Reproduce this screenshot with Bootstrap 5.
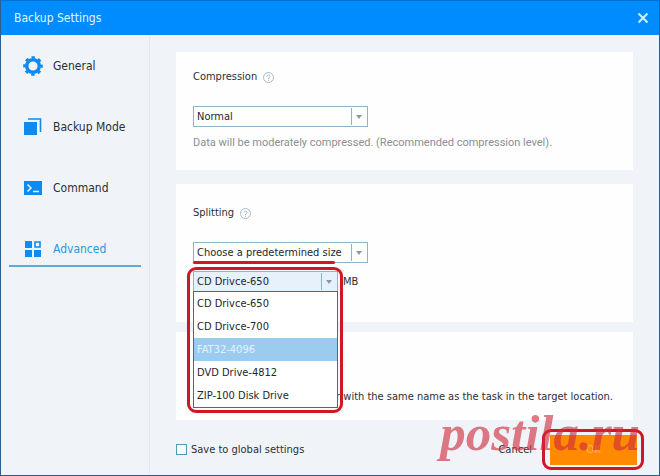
<!DOCTYPE html>
<html lang="en">
<head>
<meta charset="utf-8">
<meta name="viewport" content="width=device-width, initial-scale=1">
<title>Backup Settings</title>
<link href="https://cdn.jsdelivr.net/npm/bootstrap@5.3.0/dist/css/bootstrap.min.css" rel="stylesheet">
<style>
  body { font-family: "DejaVu Sans Condensed", "Noto Sans", sans-serif; font-size: 11px; line-height: 16px; color: #2b2f33; }
  .app-window { background: #f0f4f9; border: 1px solid #2d5c8e; border-top-color: #0670cf; }
  .title-bar { background: #008cff; color: #e4f5ff; font-size: 12px; height: 34px; padding: 0 10px 0 13px; }
  .title-bar button { line-height: 0; color: #c8f4ff; }
  .side-nav { width: 149px; border-right: 1px solid #e4e8ee; padding: 8px 8px 0; }
  .side-link { font-size: 12px; height: 41px; margin-bottom: 20px; padding: 7px 0 0 14px; gap: 10px; color: #2b2f33; text-decoration: none; border-bottom: 2px solid transparent; }
  .side-link.active { color: #2699dc; border-bottom-color: #5aaed2; }
  .side-link svg { width: 20px; height: 20px; color: #0d8bf0; }
  .content-area { padding: 17px 26px 4px 26px; }
  .panel { background: #fefefe; padding: 17px 17px 0; }
  .panel-compression { height: 118px; margin-bottom: 14px; }
  .panel-splitting { height: 138px; margin-bottom: 10px; padding-top: 21px; }
  .panel-task { height: 88px; padding: 57px 20px 0; white-space: nowrap; }
  .panel-title { gap: 6px; margin-bottom: 21px; }
  .panel-title svg { color: #a9b8c6; }
  .combo { position: relative; width: 175px; }
  .combo select { appearance: none; display: block; width: 100%; height: 21px; padding: 0 3px; border: 1px solid #8fb3c9; border-radius: 0; background: #fff; color: #23272b; font: inherit; }
  .combo .combo-arrow { position: absolute; right: 1px; top: 2px; pointer-events: none; color: #8798a8; }
  .size-row { gap: 5px; }
  .combo-size { width: 145px; }
  .combo-size select { background: #e6f1fb; }
  .combo-marked::after { content: ""; position: absolute; left: 0; top: 19px; width: 142px; height: 3px; background: #cf1827; border-radius: 2px; }
  .size-menu { position: absolute; z-index: 2; top: 20px; left: 0; width: 145px; background: #fff; border: 1px solid #3c6f8e; }
  .size-menu button { height: 23px; padding: 0 3px; text-align: left; border: 0; background: none; color: #23272b; }
  .size-menu button.chosen { background: #9ccbf0; color: #e2f3ff; }
  .red-frame { position: absolute; z-index: 3; border: 3px solid #cf1827; border-radius: 9px; pointer-events: none; }
  .size-frame { left: -6px; top: -4px; width: 156px; height: 146px; }
  .hint { color: #8b8f94; margin-top: 8px; font-family: Roboto, sans-serif; }
  .footer-row { min-height: 51px; padding-top: 8px; }
  .footer-row input { appearance: none; width: 11px; height: 11px; border: 1px solid #4e9bb5; background: #f7fbff; }
  .footer-row .btn { font-size: 11px; line-height: 16px; color: #2b2f33; }
  .footer-actions { gap: 18px; }
  .ok-wrap { position: relative; margin-right: -4px; }
  .ok-wrap .ok-btn { display: block; width: 87px; height: 30px; border: 0; background: #ff8a00; color: #ffb561; }
  .ok-frame { inset: -6px -7px -5px -8px; }
  .watermark { position: absolute; z-index: 4; right: 19px; bottom: 17px; font: italic 700 51px/50px "Liberation Serif", serif; color: rgba(207,40,58,.62); pointer-events: none; }
</style>
</head>
<body>
<div class="app-window min-vh-100 d-flex flex-column position-relative overflow-hidden">
  <header class="title-bar d-flex align-items-center justify-content-between">
    <span>Backup Settings</span>
    <button class="btn p-0 border-0" type="button" aria-label="Close"><svg width="12" height="12" viewBox="0 0 12 12" fill="none" stroke="currentColor" stroke-width="2"><path d="M1.5 1.5l9 9m0-9l-9 9"/></svg></button>
  </header>
  <div class="d-flex flex-grow-1">
    <nav class="side-nav flex-shrink-0" aria-label="Sections">
      <a class="side-link d-flex align-items-center" href="#general"><svg viewBox="0 0 20 20" fill="none" stroke="currentColor"><circle cx="10" cy="10" r="6.3" stroke-width="3.4"/><circle cx="10" cy="10" r="8.6" stroke-width="2.4" stroke-dasharray="3.4 3.354" stroke-dashoffset="1.7"/></svg>General</a>
      <a class="side-link d-flex align-items-center" href="#mode"><svg viewBox="0 0 20 20"><path d="M1 5h13v13H1z" fill="currentColor"/><path d="M5 2h12.5v13" fill="none" stroke="currentColor" stroke-width="1.6"/></svg>Backup Mode</a>
      <a class="side-link d-flex align-items-center" href="#command"><svg viewBox="0 0 20 20"><path d="M1 3h18v14H1z" fill="currentColor"/><path d="M4.500 6.500L8 10l-3.500 3.500M10 13.500h6" fill="none" stroke="#e4f4ff" stroke-width="1.500"/></svg>Command</a>
      <a class="side-link active d-flex align-items-center" href="#advanced" aria-current="page"><svg viewBox="0 0 20 20" fill="currentColor"><path d="M2 2h7v7H2zM2 11h7v7H2zM11 11h7v7h-7z"/><path d="M12 3h5v5h-5z" fill="none" stroke="currentColor" stroke-width="1.600"/></svg>Advanced</a>
    </nav>
    <main class="content-area flex-grow-1 d-flex flex-column">
      <section class="panel panel-compression">
        <div class="panel-title d-flex align-items-center"><label for="level">Compression</label><svg width="11" height="11" viewBox="0 0 11 11" fill="none" stroke="currentColor"><circle cx="5.500" cy="5.500" r="5"/><path d="M4 4.500a1.500 1.500 0 1 1 1.500 1.500v1M5.500 7.700v1"/></svg></div>
        <div class="combo"><select id="level"><option>Normal</option></select><svg class="combo-arrow" width="16" height="17" viewBox="0 0 16 17"><path d="M.5 0v17" stroke="#8fb3c9"/><path d="M5 7h6L8 11z" fill="currentColor"/></svg></div>
        <p class="hint mb-0 text-nowrap">Data will be moderately compressed. (Recommended compression level).</p>
      </section>
      <section class="panel panel-splitting">
        <div class="panel-title d-flex align-items-center"><label for="split">Splitting</label><svg width="11" height="11" viewBox="0 0 11 11" fill="none" stroke="currentColor"><circle cx="5.500" cy="5.500" r="5"/><path d="M4 4.500a1.500 1.500 0 1 1 1.500 1.500v1M5.500 7.700v1"/></svg></div>
        <div class="combo combo-marked mb-2"><select id="split"><option>Choose a predetermined size</option></select><svg class="combo-arrow" width="16" height="17" viewBox="0 0 16 17"><path d="M.5 0v17" stroke="#8fb3c9"/><path d="M5 7h6L8 11z" fill="currentColor"/></svg></div>
        <div class="size-row d-flex align-items-center">
          <div class="combo combo-size">
            <select id="size" aria-label="Volume size"><option>CD Drivce-650</option></select><svg class="combo-arrow" width="16" height="17" viewBox="0 0 16 17"><path d="M.5 0v17" stroke="#8fb3c9"/><path d="M5 7h6L8 11z" fill="currentColor"/></svg>
            <div class="size-menu d-flex flex-column">
              <button type="button">CD Drivce-650</button>
              <button type="button">CD Drivce-700</button>
              <button type="button" class="chosen">FAT32-4096</button>
              <button type="button">DVD Drive-4812</button>
              <button type="button">ZIP-100 Disk Drive</button>
            </div>
            <div class="red-frame size-frame"></div>
          </div>
          <label for="size">MB</label>
        </div>
      </section>
      <section class="panel panel-task text-end">er with the same name as the task in the target location.</section>
      <footer class="footer-row d-flex align-items-center justify-content-between">
        <div class="d-flex align-items-center gap-1"><input type="checkbox" id="global"><label for="global">Save to global settings</label></div>
        <div class="footer-actions d-flex align-items-center">
          <button class="btn p-0 border-0" type="button">Cancel</button>
          <div class="ok-wrap"><button class="ok-btn" type="button">OK</button><div class="red-frame ok-frame"></div></div>
        </div>
      </footer>
    </main>
  </div>
  <div class="watermark">postila.ru</div>
</div>
<script src="https://cdn.jsdelivr.net/npm/bootstrap@5.3.0/dist/js/bootstrap.bundle.min.js"></script>
</body>
</html>
